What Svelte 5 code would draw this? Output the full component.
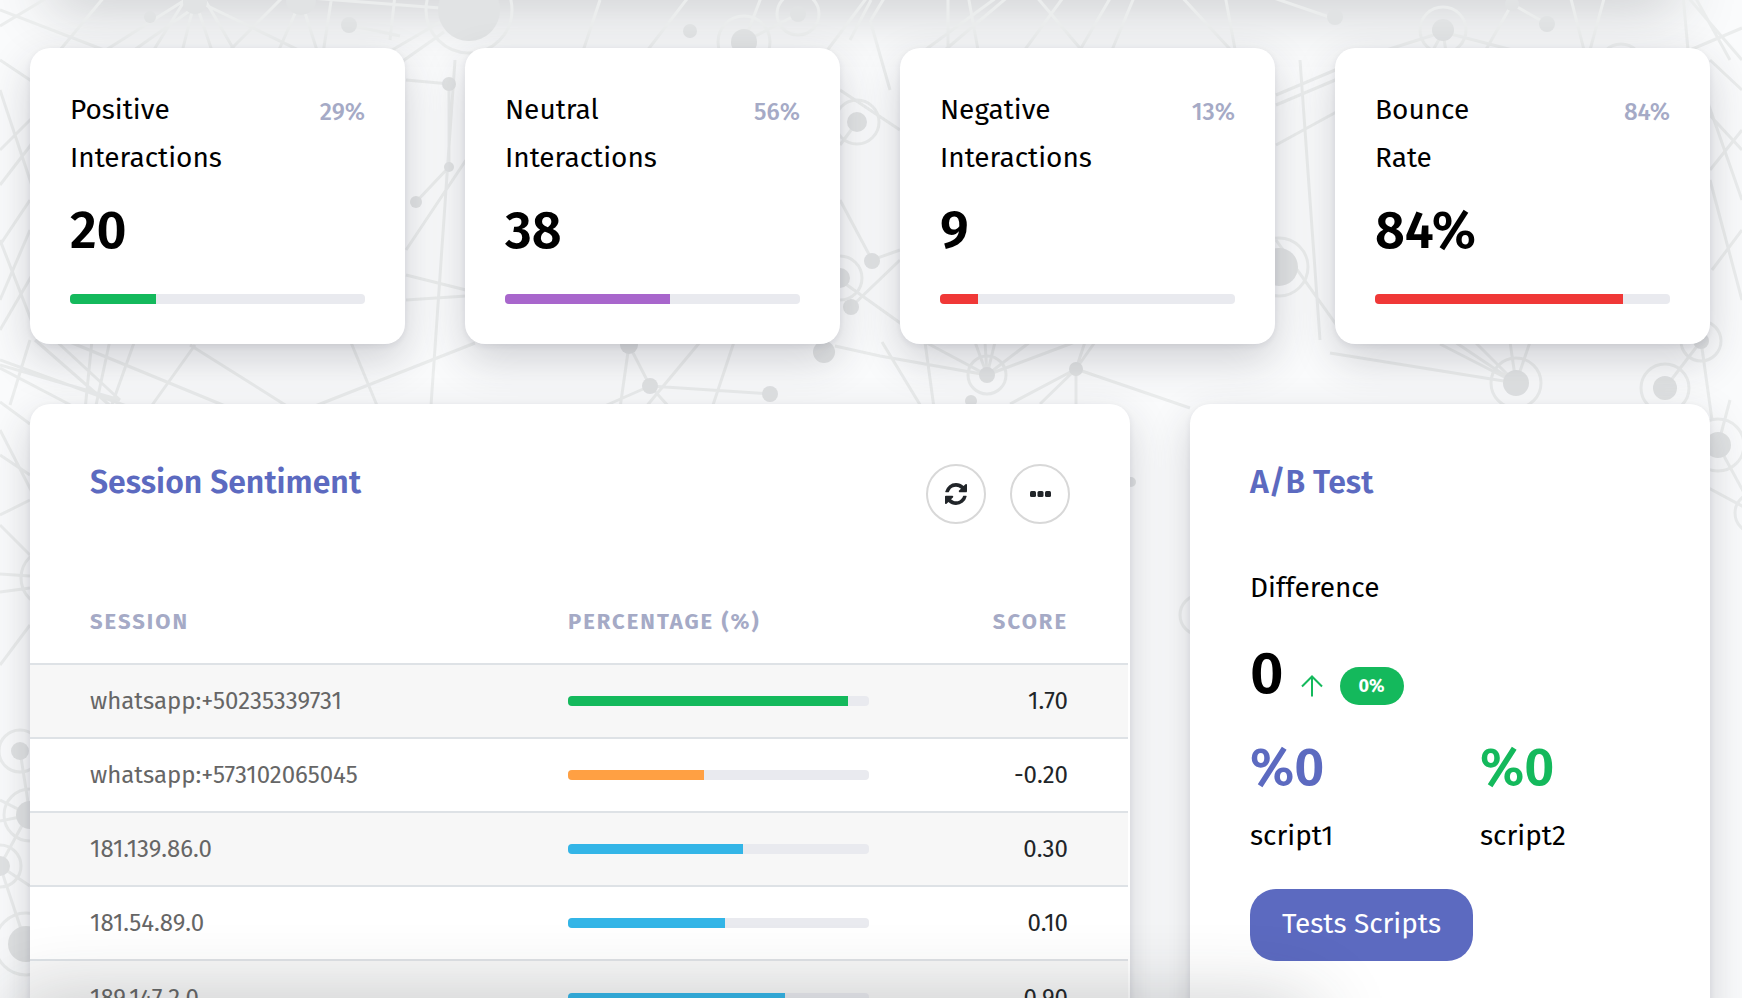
<script lang="ts">
  type Stat = {
    title: string;
    percent: string;
    value: string;
    fill: number;
    tone: string;
  };

  type Session = {
    name: string;
    fill: number;
    score: string;
    tone: string;
  };

  const stats: Stat[] = [
    { title: "Positive Interactions", percent: "29%", value: "20", fill: 29, tone: "green" },
    { title: "Neutral Interactions", percent: "56%", value: "38", fill: 56, tone: "purple" },
    { title: "Negative Interactions", percent: "13%", value: "9", fill: 13, tone: "red" },
    { title: "Bounce Rate", percent: "84%", value: "84%", fill: 84, tone: "red" },
  ];

  const sessions: Session[] = [
    { name: "whatsapp:+50235339731", fill: 93, score: "1.70", tone: "green" },
    { name: "whatsapp:+573102065045", fill: 45, score: "-0.20", tone: "orange" },
    { name: "181.139.86.0", fill: 58, score: "0.30", tone: "blue" },
    { name: "181.54.89.0", fill: 52, score: "0.10", tone: "blue" },
    { name: "189.147.2.0", fill: 72, score: "0.90", tone: "blue" },
  ];

  const scripts = [
    { name: "script1", share: "%0", tone: "indigo" },
    { name: "script2", share: "%0", tone: "green" },
  ];

  // Backdrop network: x, y, radius, ring radius (0 = no ring)
  const nodes = [
    [469, 10, 31, 43], [798, 14, 8, 21], [744, 42, 13, 26], [349, 25, 8, 0],
    [301, 0, 15, 0], [150, 17, 6, 0], [195, 2, 12, 0], [690, 31, 7, 0],
    [1335, 17, 8, 0], [1443, 30, 11, 23], [1512, 4, 7, 0], [1547, 24, 8, 0],
    [1621, 66, 0, 22], [449, 84, 7, 0], [449, 167, 5, 0], [416, 202, 6, 0],
    [857, 122, 10, 22], [872, 261, 8, 0], [851, 307, 8, 0], [840, 278, 10, 22],
    [1279, 267, 19, 29], [824, 352, 11, 0], [629, 345, 9, 0], [650, 386, 8, 0],
    [770, 394, 8, 0], [987, 375, 8, 19], [1076, 369, 7, 0], [971, 401, 6, 0],
    [1516, 383, 13, 25], [1665, 388, 12, 24], [1701, 341, 8, 20],
    [20, 751, 9, 21], [30, 815, 14, 26], [0, 866, 10, 21], [26, 944, 18, 31],
    [50, 578, 0, 29], [1718, 445, 13, 26], [1755, 513, 0, 20],
    [1200, 615, 0, 20], [1131, 482, 5, 0],
  ];

  const lines = [
    "M0 10 130 60M0 26 60 -10M60 50 110 -10M90 60 185 0 60 200M120 60 205 0 240 60",
    "M195 0 180 60M195 0 215 60M195 0 340 70M230 50 285 -5M301 0 320 60M301 0 270 70",
    "M310 -2 440 8M332 -5 322 60M349 25 400 36M395 -5 390 40M440 22 375 60M444 32 390 70",
    "M744 42 762 -5M744 42 798 14M820 60 880 -20M850 40 871 0M640 60 690 -5M580 60 600 0",
    "M871 20 886 -5M925 50 1000 -5M945 50 1010 -5M948 -5 948 50M968 -5 978 50M1035 -5 1090 60",
    "M1065 -5 1010 70M1112 -5 1080 50M1135 -5 1112 50M1225 -5 1237 60M1265 -5 1335 19M1180 -5 1240 60",
    "M1443 32 1380 52M1443 32 1432 52M1443 32 1446 52M1443 32 1520 52M1512 4 1547 24M1512 4 1480 60",
    "M1570 -5 1584 50M1605 -5 1590 50M1683 -5 1688 50M1686 -5 1742 60M1694 -5 1730 60M1742 28 1690 50",
    "M0 60 45 90M0 150 40 110M0 185 50 120M0 245 30 200M0 300 30 230M0 90 40 210M0 330 35 270M0 240 35 330",
    "M406 80 450 84M455 60 430 420M449 84 449 167 416 202M406 275 466 290M406 300 466 296M406 250 466 160",
    "M840 90 900 130M840 200 872 260 900 250M851 307 900 260M840 280 910 330M870 20 890 90M840 145 857 122",
    "M1276 95 1340 68M1276 105 1340 78M1276 145 1340 110M1300 60 1320 340M1276 240 1340 330M1300 60 1310 200",
    "M1710 60 1742 90M1700 80 1742 200M1705 110 1742 150M1710 170 1742 130M1712 270 1742 230M1710 180 1742 300",
    "M0 360 220 440M0 368 80 410M0 365 120 400M30 340 10 405M35 340 115 410M55 340 120 400M92 340 85 410",
    "M110 340 95 410M135 340 110 410M65 340 230 408M195 345 150 408M190 345 290 408M350 340 378 408M475 343 310 408",
    "M629 345 620 408M629 345 650 386 670 408M650 386 770 394M700 342 645 408M734 342 712 408M650 386 600 408",
    "M835 346 880 356 987 375M882 342 922 408M925 342 934 408M925 342 987 375 975 342M987 375 985 342M987 375 995 342",
    "M987 375 1030 342M987 375 1075 342M1085 342 1076 369 1010 404M1076 369 1040 404M1076 369 1076 408M1076 369 1190 408M1095 342 1076 369",
    "M1330 353 1516 383 1440 344M1516 383 1455 342M1516 383 1475 342M1516 383 1510 342M1516 383 1530 342M1665 388 1701 341M1701 341 1712 420",
    "M0 402 30 424M0 430 36 500M0 455 30 475M0 515 30 500M0 525 30 555M0 574 30 576M0 592 30 588M0 665 30 625",
    "M0 800 30 815 20 751M30 815 0 821M0 866 26 944M0 866 30 886M0 866 25 820M1718 445 1730 400M1718 445 1755 513M1690 478 1755 513",
  ];
</script>

<div class="page">
  <svg
    class="backdrop"
    viewBox="0 0 1742 998"
    preserveAspectRatio="xMidYMin slice"
    aria-hidden="true"
  >
    {#each lines as d}
      <path {d} />
    {/each}
    {#each nodes as [x, y, r, ring]}
      <circle class="dot" cx={x} cy={y} {r} />
      {#if ring}
        <circle class="ring" cx={x} cy={y} r={ring} />
      {/if}
    {/each}
  </svg>

  <main>
    <section class="stats">
      {#each stats as stat}
        <article class="card stat">
          <div class="stat-top">
            <h2>{stat.title}</h2>
            <span class="stat-percent">{stat.percent}</span>
          </div>
          <p class="stat-value">{stat.value}</p>
          <div class="track">
            <div class="fill {stat.tone}" style="width: {stat.fill}%"></div>
          </div>
        </article>
      {/each}
    </section>

    <section class="panels">
      <article class="card">
        <header class="panel-header">
          <h3>Session Sentiment</h3>
          <div class="actions">
            <button type="button" class="round" aria-label="Refresh">
              <svg width="22" height="22" viewBox="0 0 1536 1536" fill="currentColor">
                <path
                  d="M1511 928q0 5-1 7-64 268-268 434.500T764 1536q-146 0-282.500-55T238 1324l-129 129q-19 19-45 19t-45-19-19-45V960q0-26 19-45t45-19h448q26 0 45 19t19 45-19 45l-137 137q71 66 161 102t187 36q134 0 250-65t186-179q11-17 53-117 8-23 30-23h192q13 0 22.500 9.500t9.500 22.500zm25-800v448q0 26-19 45t-45 19h-448q-26 0-45-19t-19-45 19-45l138-138Q969 256 768 256q-134 0-250 65T332 500q-11 17-53 117-8 23-30 23H50q-13 0-22.500-9.500T18 608v-7q65-268 270-434.500T768 0q146 0 284 55.500T1297 212l130-129q19-19 45-19t45 19 19 45z"
                />
              </svg>
            </button>
            <button type="button" class="round" aria-label="More options">
              <svg width="21" height="6" viewBox="0 0 21 6" fill="currentColor">
                <rect x="0" width="6" height="6" rx="1.500" />
                <rect x="7.500" width="6" height="6" rx="1.500" />
                <rect x="15" width="6" height="6" rx="1.500" />
              </svg>
            </button>
          </div>
        </header>

        <table>
          <thead>
            <tr>
              <th class="col-session">Session</th>
              <th class="col-percentage">Percentage (%)</th>
              <th class="col-score">Score</th>
            </tr>
          </thead>
          <tbody>
            {#each sessions as session}
              <tr>
                <td class="name">{session.name}</td>
                <td class="percentage">
                  <div class="track">
                    <div class="fill {session.tone}" style="width: {session.fill}%"></div>
                  </div>
                </td>
                <td class="score">{session.score}</td>
              </tr>
            {/each}
          </tbody>
        </table>
      </article>

      <article class="card ab-test">
        <h3>A/B Test</h3>
        <p class="label">Difference</p>
        <div class="difference">
          <strong>0</strong>
          <svg width="22" height="22" viewBox="0 0 22 22" aria-hidden="true">
            <path d="M11 21.500V1.500M1 11.500 11 1.500l10 10" />
          </svg>
          <span class="badge">0%</span>
        </div>
        <div class="scripts">
          {#each scripts as script}
            <div>
              <p class="share {script.tone}">{script.share}</p>
              <p class="label">{script.name}</p>
            </div>
          {/each}
        </div>
        <button type="button" class="primary">Tests Scripts</button>
      </article>
    </section>
  </main>
</div>

<style>
  :global(body) {
    margin: 0;
  }

  .page {
    position: relative;
    height: 100vh;
    overflow: hidden;
    background: #fafbfc;
    font-family: "Fira Sans", "Noto Sans", sans-serif;
    color: #000;
  }

  /* Shadows cast by the sections scrolled out above and below */
  .page::before,
  .page::after {
    content: "";
    position: absolute;
    height: 40px;
    pointer-events: none;
  }

  .page::before {
    top: -40px;
    left: 50px;
    right: 64px;
    box-shadow: 0 4px 60px rgba(40, 42, 50, 0.3);
  }

  .page::after {
    bottom: -60px;
    left: 30px;
    right: 442px;
    box-shadow: 0 0 80px 10px rgba(40, 46, 50, 0.3);
  }

  .backdrop {
    position: absolute;
    inset: 0;
    width: 100%;
    height: 100%;
  }

  .backdrop path,
  .backdrop .ring {
    fill: none;
    stroke: #ebeded;
    stroke-width: 3;
  }

  .backdrop .dot {
    fill: #e1e3e4;
  }

  main {
    position: relative;
    display: flex;
    flex-direction: column;
    gap: 60px;
    padding: 48px 32px 0 30px;
  }

  h2,
  h3,
  p {
    margin: 0;
  }

  .card {
    background: #fff;
    border-radius: 20px;
    box-shadow:
      0 2px 6px rgba(40, 42, 60, 0.08),
      0 16px 44px rgba(40, 42, 54, 0.2);
  }

  .stats {
    display: grid;
    grid-template-columns: repeat(4, 1fr);
    gap: 60px;
  }

  .stat {
    padding: 38px 40px 40px;
  }

  .stat-top {
    display: flex;
    justify-content: space-between;
  }

  h2 {
    width: min-content;
    font-size: 28px;
    font-weight: 400;
    line-height: 48px;
  }

  .stat-percent {
    color: #a5aac6;
    font-size: 24px;
    font-weight: 500;
    line-height: 52px;
  }

  .stat-value {
    margin-bottom: 14px;
    font-size: 52px;
    font-weight: 600;
    line-height: 98px;
  }

  .track {
    height: 10px;
    overflow: hidden;
    border-radius: 4px;
    background: #e9eaef;
  }

  .fill {
    height: 100%;
  }

  .fill.green {
    background: #14b95c;
  }

  .fill.purple {
    background: #a866cc;
  }

  .fill.red {
    background: #f03837;
  }

  .fill.orange {
    background: #ffa043;
  }

  .fill.blue {
    background: #33b5e7;
  }

  .panels {
    display: grid;
    grid-template-columns: 55fr 26fr;
    gap: 60px;
  }

  .panel-header {
    display: flex;
    justify-content: space-between;
    padding: 60px 60px 56px;
  }

  h3 {
    color: #5c6ac0;
    font-size: 32px;
    font-weight: 600;
    line-height: 36px;
  }

  .actions {
    display: flex;
    gap: 24px;
  }

  .round {
    display: flex;
    align-items: center;
    justify-content: center;
    width: 60px;
    height: 60px;
    padding: 0;
    border: 2px solid #d8d8d8;
    border-radius: 50%;
    background: #fff;
    color: #212529;
    cursor: pointer;
  }

  table {
    width: calc(100% - 2px);
    border-collapse: collapse;
    table-layout: fixed;
  }

  th,
  td {
    box-sizing: border-box;
    padding: 0;
  }

  th {
    height: 84px;
    color: #a5aac6;
    font-size: 22px;
    font-weight: 700;
    letter-spacing: 2px;
    text-align: left;
    text-transform: uppercase;
  }

  .col-session {
    width: 49%;
  }

  .col-percentage {
    width: 28%;
  }

  td {
    height: 74px;
    border-top: 2px solid #dee2e6;
    font-size: 24px;
  }

  th:first-child,
  td:first-child {
    padding-left: 60px;
  }

  th:last-child,
  td:last-child {
    padding-right: 60px;
    text-align: right;
  }

  tbody tr:nth-child(odd) {
    background: #f7f7f7;
  }

  .name {
    color: #666;
  }

  .percentage {
    padding-right: 6px;
  }

  .score {
    color: #212529;
  }

  .ab-test {
    padding: 60px;
  }

  .label {
    font-size: 28px;
    line-height: 42px;
  }

  .ab-test > .label {
    margin-top: 67px;
  }

  .difference {
    display: flex;
    align-items: flex-end;
    height: 96px;
  }

  .difference strong {
    font-size: 58px;
    font-weight: 600;
    line-height: 62px;
  }

  .difference svg {
    margin: 0 17px 8px;
    fill: none;
    stroke: #14b95c;
    stroke-width: 2;
  }

  .badge {
    padding: 0 19px;
    border-radius: 20px;
    background: #14b95c;
    color: #fff;
    font-size: 18px;
    font-weight: 700;
    line-height: 38px;
  }

  .scripts {
    display: grid;
    grid-template-columns: 1fr 1fr;
    gap: 60px;
    margin-top: 25px;
  }

  .share {
    margin-bottom: 9px;
    font-size: 52px;
    font-weight: 600;
    line-height: 76px;
  }

  .share.indigo {
    color: #5c6ac0;
  }

  .share.green {
    color: #14b95c;
  }

  .primary {
    height: 72px;
    margin-top: 32px;
    padding: 0 32px 4px;
    border: 0;
    border-radius: 26px;
    background: #5c6ac0;
    color: #fff;
    font-family: inherit;
    font-size: 28px;
    font-weight: 400;
    cursor: pointer;
  }
</style>
